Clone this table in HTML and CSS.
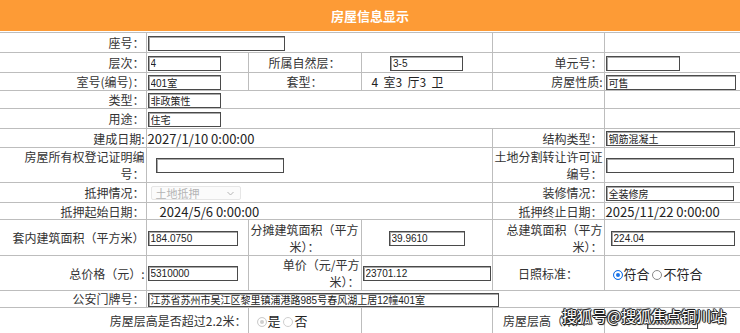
FILE: index.html
```html
<!DOCTYPE html>
<html lang="zh-CN">
<head>
<meta charset="utf-8">
<title>房屋信息显示</title>
<link rel="stylesheet" href="styles.css">
</head>
<body>
<div class="title">房屋信息显示</div>
<table class="info">
  <colgroup>
    <col class="c1"><col class="c2"><col class="c3"><col class="c4"><col class="c5"><col class="c6">
  </colgroup>
  <tr class="h20">
    <td class="lab">座号：</td>
    <td colspan="3"><input class="in w137" readonly value=""></td>
    <td></td><td></td>
  </tr>
  <tr class="h20">
    <td class="lab">层次：</td>
    <td><input class="in w72" readonly value="4"></td>
    <td class="ctr">所属自然层：</td>
    <td class="ctr"><input class="in w73" readonly value="3-5"></td>
    <td class="lab">单元号：</td>
    <td><input class="in w74" readonly value=""></td>
  </tr>
  <tr class="h18">
    <td class="lab">室号(编号)：</td>
    <td><input class="in w72" readonly value="401室"></td>
    <td class="ctr">套型：</td>
    <td class="rooms">4&nbsp; 室3&nbsp; 厅3&nbsp; 卫</td>
    <td class="lab">房屋性质:</td>
    <td><input class="in w130" readonly value="可售"></td>
  </tr>
  <tr class="h18">
    <td class="lab">类型：</td>
    <td colspan="4"><input class="in w72" readonly value="非政策性"></td>
    <td></td>
  </tr>
  <tr class="h20">
    <td class="lab">用途：</td>
    <td colspan="4"><input class="in w72" readonly value="住宅"></td>
    <td></td>
  </tr>
  <tr class="h19">
    <td class="lab">建成日期:</td>
    <td colspan="3" class="date">2027/1/10 0:00:00</td>
    <td class="lab">结构类型：</td>
    <td><input class="in w129" readonly value="钢筋混凝土"></td>
  </tr>
  <tr class="h35">
    <td class="lab two">房屋所有权登记证明编<br>号：</td>
    <td colspan="3"><input class="in w128 ml8" readonly value=""></td>
    <td class="lab two">土地分割转让许可证<br>编号：</td>
    <td><input class="in w128" readonly value=""></td>
  </tr>
  <tr class="h20">
    <td class="lab">抵押情况：</td>
    <td colspan="3">
      <span class="sel">土地抵押<svg class="chev" width="7" height="5" viewBox="0 0 7 5"><path d="M0.5 1 L3.5 4 L6.5 1" fill="none" stroke="#b5b5b5" stroke-width="1"/></svg></span>
    </td>
    <td class="lab">装修情况：</td>
    <td><input class="in w128" readonly value="全装修房"></td>
  </tr>
  <tr class="h17">
    <td class="lab">抵押起始日期：</td>
    <td colspan="3" class="date pl13">2024/5/6 0:00:00</td>
    <td class="lab">抵押终止日期：</td>
    <td class="date">2025/11/22 0:00:00</td>
  </tr>
  <tr class="h36">
    <td class="lab">套内建筑面积（平方米）</td>
    <td><input class="in w90" readonly value="184.0750"></td>
    <td class="ctr two">分摊建筑面积（平方<br>米）：</td>
    <td class="ctr"><input class="in w76" readonly value="39.9610"></td>
    <td class="lab two">总建筑面积（平方<br>米）：</td>
    <td class="ctr"><input class="in w124" readonly value="224.04"></td>
  </tr>
  <tr class="h35">
    <td class="lab">总价格（元）:</td>
    <td><input class="in w90" readonly value="5310000"></td>
    <td class="lab two">单价（元/平方<br>米）：</td>
    <td><input class="in w128" readonly value="23701.12"></td>
    <td class="ctr">日照标准：</td>
    <td class="opts"><span class="radio on"></span>符合 <span class="radio"></span>不符合</td>
  </tr>
  <tr class="h16">
    <td class="lab">公安门牌号：</td>
    <td colspan="5"><input class="in w351 addr" readonly value="江苏省苏州市吴江区黎里镇浦港路985号春风湖上居12幢401室"></td>
  </tr>
  <tr class="h27">
    <td colspan="2" class="lab">房屋层高是否超过2.2米：</td>
    <td class="opts"><span class="radio dis on"></span>是 <span class="radio dis"></span>否</td>
    <td></td>
    <td class="ctr">房屋层高（米）：</td>
    <td class="ctr"><input class="in w51" readonly value=""></td>
  </tr>
</table>
<div class="wm">搜狐号@搜狐焦点铜川站</div>
</body>
</html>
```

FILE: styles.css
```css
* { box-sizing: border-box; }
body {
  margin: 0;
  position: relative;
  background: #fff;
  color: #333;
  font-family: "Noto Sans CJK SC", "Noto Sans", sans-serif;
}
.title {
  height: 31px;
  line-height: 31px;
  background: #fd9b36;
  color: #fff;
  font-weight: bold;
  font-size: 13px;
  text-align: center;
}
.info {
  border-collapse: collapse;
  table-layout: fixed;
  width: 741px;
  margin-top: 1px;
  font-size: 12px;
}
.c1 { width: 146px; }
.c2 { width: 102px; }
.c3 { width: 113px; }
.c4 { width: 131px; }
.c5 { width: 112px; }
.c6 { width: 137px; }
.info td {
  border: 1px solid #bdbdbd;
  padding: 0 1px;
  vertical-align: middle;
  line-height: 13px;
  white-space: nowrap;
}
.info td.two { line-height: 17px; }
.info td:first-child { border-left: none; }
.h16 { height: 16px; }
.h17 { height: 17px; }
.h18 { height: 18px; }
.h19 { height: 19px; }
.h20 { height: 20px; }
.h27 { height: 27px; }
.h35 { height: 35px; }
.h36 { height: 36px; }
.lab { text-align: right; }
.ctr { text-align: center; }
.date { font-size: 13px; color: #222; }
.pl13 { padding-left: 13px !important; }
.rooms { padding-left: 10px !important; font-size: 12px; color: #222; }
.in {
  display: inline-block;
  height: 15px;
  border: 1px solid #4a4a4a;
  box-shadow: inset 1px 1px 0 #a8a8a8;
  background: #fff;
  font: 10px "Liberation Sans", "Noto Sans CJK SC", sans-serif;
  color: #222;
  padding: 0 2px;
  margin: 0;
  vertical-align: middle;
  outline: none;
}
.addr { height: 14px; }
.ml8 { margin-left: 8px; }
.w51 { width: 51px; }
.w72 { width: 73px; }
.w73 { width: 73px; }
.w74 { width: 74px; }
.w76 { width: 76px; }
.w90 { width: 90px; }
.w124 { width: 124px; }
.w128 { width: 128px; }
.w129 { width: 129px; }
.w130 { width: 130px; }
.w137 { width: 137px; }
.w351 { width: 351px; }
.sel {
  display: inline-flex;
  align-items: center;
  justify-content: space-between;
  width: 90px;
  height: 14px;
  margin-left: 3px;
  padding: 0 6px 0 4px;
  border: 1px solid #e6e6e6;
  border-radius: 2px;
  background: #fbfbfb;
  color: #b4b4b4;
  font-size: 11px;
  line-height: 12px;
  vertical-align: middle;
}
.opts { padding-left: 8px !important; font-size: 13px; color: #222; }
.radio {
  display: inline-block;
  width: 10px;
  height: 10px;
  border-radius: 50%;
  border: 1px solid #8a8a8a;
  background: #fff;
  vertical-align: -1px;
  margin-right: 1px;
}
.radio.on {
  border-color: #1a73e8;
  background: #1a73e8;
  box-shadow: inset 0 0 0 2px #fff;
}
.radio.dis { border-color: #cfcfcf; }
.radio.dis.on { background: #cfcfcf; }
.wm {
  position: absolute;
  left: 562px;
  top: 306px;
  font-size: 15px;
  line-height: 20px;
  color: #fff;
  text-shadow: 1px 0 0 #222, -1px 0 0 #222, 0 1px 0 #222, 0 -1px 0 #222, 1px 1px 1px #222, -1px -1px 1px #222;
  white-space: nowrap;
}
```
